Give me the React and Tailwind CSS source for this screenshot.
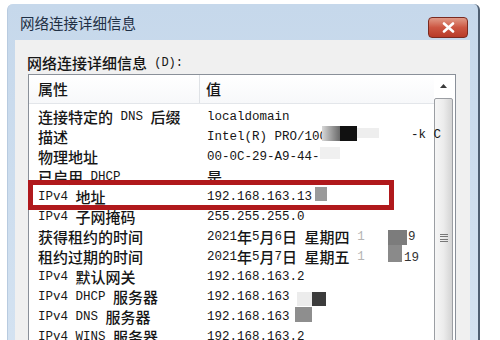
const CJK = /[\u3000-\u9fff\uff00-\uffef]/;
const SPLIT = /([\u3000-\u9fff\uff00-\uffef]+)/;

// SimSun-ish look: CJK at full width, latin in a narrow mono
const Mix = ({ t }) =>
  t.split(SPLIT).filter(Boolean).map((s, i) =>
    CJK.test(s) ? (
      <span key={i} className="font-['Noto_Sans_CJK_SC',sans-serif] font-medium text-[15px]">{s}</span>
    ) : (
      <span key={i} className="font-['Liberation_Mono',monospace] text-[12.5px] whitespace-pre">{s}</span>
    )
  );

const rows = [
  ['连接特定的 DNS 后缀', 'localdomain'],
  ['描述', 'Intel(R) PRO/100'],
  ['物理地址', '00-0C-29-A9-44-'],
  ['已启用 DHCP', '是'],
  ['IPv4 地址', '192.168.163.13'],
  ['IPv4 子网掩码', '255.255.255.0'],
  ['获得租约的时间', '2021年5月6日 星期四 ', '1'],
  ['租约过期的时间', '2021年5月7日 星期五 ', '1'],
  ['IPv4 默认网关', '192.168.163.2'],
  ['IPv4 DHCP 服务器', '192.168.163'],
  ['IPv4 DNS 服务器', '192.168.163'],
  ['IPv4 WINS 服务器', '192.168.163.2'],
];

export default function App() {
  return (
    <div className="relative w-[500px] h-[340px] overflow-hidden bg-white text-[#161616]">
      {/* Window frame */}
      <div className="ml-[7px] mt-[4px] w-[473px] h-[400px] rounded-t-[6px] border-r-2 border-r-[#4f5f72] border-l border-l-[#b8cbe0] bg-gradient-to-b from-[#c6d8eb] to-[#d6e4f2] pl-[7px] pr-[8px]">
        {/* Title bar */}
        <div className="h-[36px] flex items-center justify-between">
          <span className="pl-[5px] pt-[2px] font-['Noto_Sans_CJK_SC',sans-serif] text-[14.5px] text-[#1f2f44]">网络连接详细信息</span>
          <button className="mt-[10px] mr-[2px] w-[40px] h-[21px] rounded-[4px] border border-[#7a2a20] bg-gradient-to-b from-[#e09a88] via-[#cc5642] to-[#b83a28] flex items-center justify-center">
            <svg width="13" height="11" viewBox="0 0 13 11">
              <path d="M2 1.5 L11 9.5 M11 1.5 L2 9.5" stroke="#fff" strokeWidth="2.6" strokeLinecap="round" />
            </svg>
          </button>
        </div>

        {/* Content */}
        <div className="h-[360px] bg-[#f0f0f0] pl-[12px] pt-[12px]">
          <div className="h-[22px] flex items-center">
            <Mix t="网络连接详细信息" />
            <span className="font-['Liberation_Mono',monospace] text-[12px] whitespace-pre"> (D):</span>
          </div>

          {/* List box */}
          <div className="ml-[1px] w-[428px] h-[300px] border border-[#8a9099] bg-white flex">
            <div className="w-[405px]">
              <div className="h-[29px] flex items-center border-b border-[#e3e6ea] bg-gradient-to-b from-white to-[#f7f8fa]">
                <div className="w-[171px] h-full pl-[9px] flex items-center border-r border-[#dfe2e6]">
                  <Mix t="属性" />
                </div>
                <div className="pl-[6px] flex items-center">
                  <Mix t="值" />
                </div>
              </div>
              <div className="pt-[3px]">
                {rows.map(([k, v, faint]) => (
                  <div key={k} className="h-[20px] flex items-center whitespace-nowrap">
                    <div className="w-[171px] pl-[9px] flex items-center">
                      <Mix t={k} />
                    </div>
                    <div className="pl-[7px] flex items-center">
                      <Mix t={v} />
                      {faint && (
                        <span className="font-['Liberation_Mono',monospace] text-[12.5px] text-[#b5b5b5]">{faint}</span>
                      )}
                    </div>
                  </div>
                ))}
              </div>
            </div>

            {/* Scrollbar */}
            <div className="w-[21px] flex flex-col items-start">
              <div className="w-[19px] h-[21px] flex items-center justify-center">
                <svg width="7" height="4" viewBox="0 0 7 4">
                  <path d="M0 4 L3.5 0 L7 4 Z" fill="#3a3a3a" />
                </svg>
              </div>
              <div className="mt-[2px] w-[19px] h-[260px] rounded-[2px] border border-[#9b9ea3] bg-gradient-to-r from-[#f6f6f6] via-[#ececec] to-[#d4d4d4] flex justify-center">
                <div className="mt-[135px] w-[8px] h-[8px] flex flex-col justify-between">
                  <div className="h-px bg-[#777]" />
                  <div className="h-px bg-[#777]" />
                  <div className="h-px bg-[#777]" />
                  <div className="h-px bg-[#777]" />
                </div>
              </div>
            </div>
          </div>
        </div>
      </div>

      {/* Redaction mosaics */}
      <div className="absolute left-[322px] top-[126px] w-[18px] h-[15px] bg-gradient-to-r from-[#d8d8d8] to-[#6a6a6a]" />
      <div className="absolute left-[340px] top-[126px] w-[17px] h-[15px] bg-[#111]" />
      <div className="absolute left-[357px] top-[128px] w-[22px] h-[10px] bg-[#eeeeee]" />
      <span className="absolute left-[411px] top-[128px] font-['Liberation_Mono',monospace] text-[12.5px] leading-[14px]">-k C</span>
      <div className="absolute left-[320px] top-[147px] w-[20px] h-[12px] bg-[#f0f0f0]" />
      <div className="absolute left-[315px] top-[187px] w-[12px] h-[14px] bg-[#9a9a9a]" />
      <div className="absolute left-[388px] top-[230px] w-[19px] h-[15px] bg-[#7c7c7c]" />
      <div className="absolute left-[388px] top-[245px] w-[14px] h-[17px] bg-[#8a8a8a]" />
      <span className="absolute left-[408px] top-[230px] font-['Liberation_Mono',monospace] text-[12.5px] leading-[14px] text-[#333]">9</span>
      <span className="absolute left-[404px] top-[251px] font-['Liberation_Mono',monospace] text-[12.5px] leading-[14px] text-[#333]">19</span>
      <div className="absolute left-[297px] top-[292px] w-[15px] h-[14px] bg-[#ececec]" />
      <div className="absolute left-[312px] top-[292px] w-[14px] h-[14px] bg-[#3c3c3c]" />
      <div className="absolute left-[295px] top-[307px] w-[17px] h-[15px] bg-[#8e8e8e]" />

      {/* Highlight */}
      <div className="absolute left-[28px] top-[180px] w-[366px] h-[30px] border-[5px] border-[#b0191c]" />
    </div>
  );
}
